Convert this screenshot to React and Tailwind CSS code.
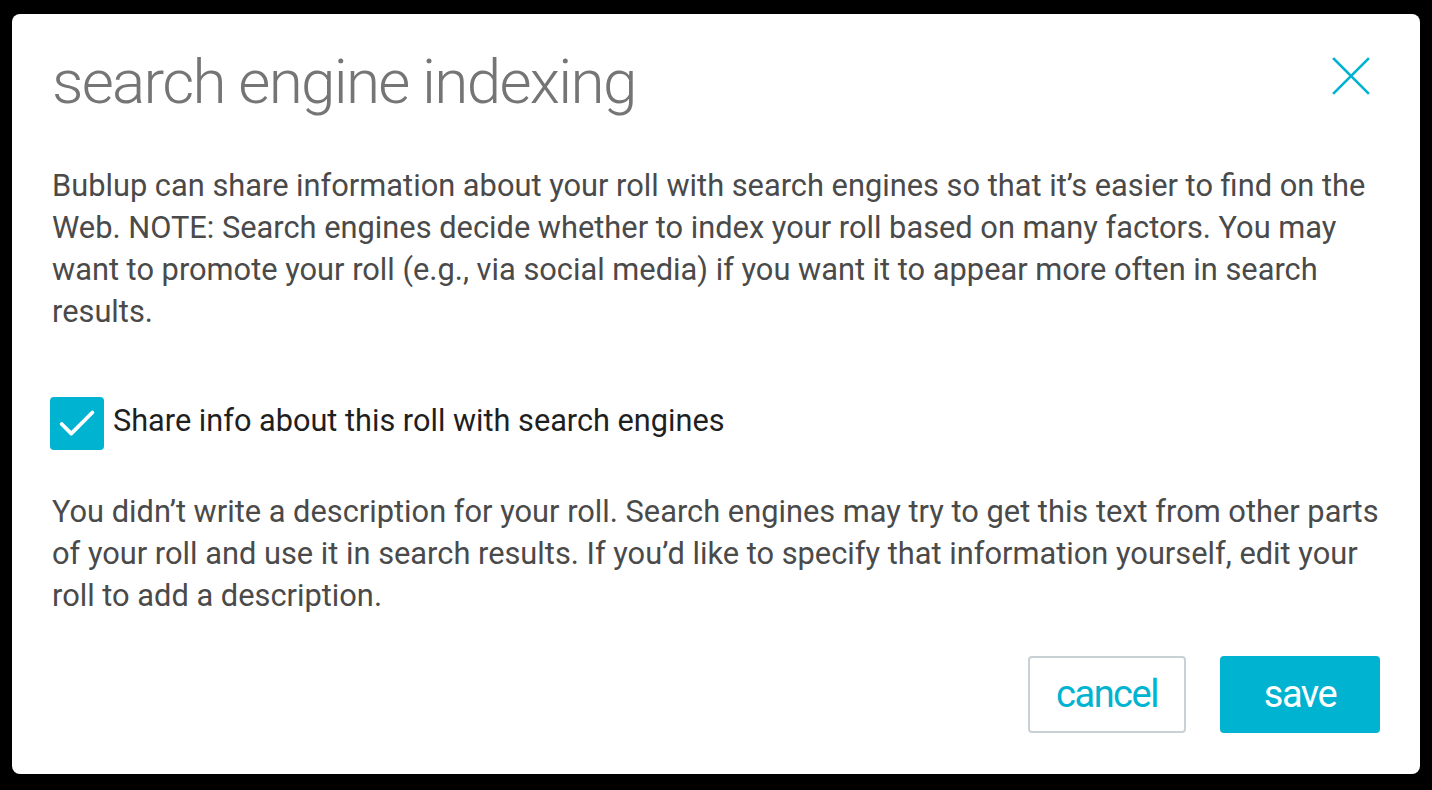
import { Check } from 'lucide-react';

const App = () => {
    return (
        <div className="min-h-screen bg-black px-3 pt-[14px] pb-4 font-['Roboto',sans-serif]">
            <div className="bg-white rounded-lg px-10 pt-[22px] pb-[41px] h-[760px] flex flex-col">
                <div className="flex items-start justify-between">
                    <h1 className="text-[62px] leading-[92px] font-light text-[#757575] tracking-[-1.7px]">
                        search engine indexing
                    </h1>
                    <button className="mt-[21px] mr-[10px] text-[#00b3d1]">
                        <svg width="38" height="38" viewBox="0 0 38 38" fill="none" stroke="currentColor" strokeWidth="2.6" strokeLinecap="square">
                            <line x1="2" y1="2" x2="36" y2="36" />
                            <line x1="36" y1="2" x2="2" y2="36" />
                        </svg>
                    </button>
                </div>

                <p className="mt-[37px] -mr-2 text-[30.8px] leading-[42px] text-[#4a4a4a]">
                    Bublup can share information about your roll with search engines so that it’s easier to find on the Web. NOTE: Search engines decide whether to index your roll based on many factors. You may want to promote your roll (e.g., via social media) if you want it to appear more often in search results.
                </p>

                <label className="mt-[64px] flex items-center gap-[9px] cursor-pointer">
                    <span className="w-[54px] h-[53px] -ml-[2px] rounded bg-[#00b3d1] flex items-center justify-center">
                        <Check size={46} strokeWidth={2} className="text-white" />
                    </span>
                    <span className="mb-[6px] text-[30.7px] leading-[42px] text-[#1f1f1f]">
                        Share info about this roll with search engines
                    </span>
                </label>

                <p className="mt-[41px] -mr-2 text-[30.8px] leading-[42px] text-[#4a4a4a]">
                    You didn’t write a description for your roll. Search engines may try to get this text from other parts of your roll and use it in search results. If you’d like to specify that information yourself, edit your roll to add a description.
                </p>

                <div className="mt-auto flex justify-end gap-[34px]">
                    <button className="w-[158px] h-[77px] rounded border-2 border-[#c8d1d5] text-[#00b3d1] text-[38px] tracking-[-1.5px]">
                        cancel
                    </button>
                    <button className="w-[160px] h-[77px] rounded bg-[#00b3d1] text-white text-[38px] tracking-[-1.5px]">
                        save
                    </button>
                </div>
            </div>
        </div>
    );
};

export default App;
